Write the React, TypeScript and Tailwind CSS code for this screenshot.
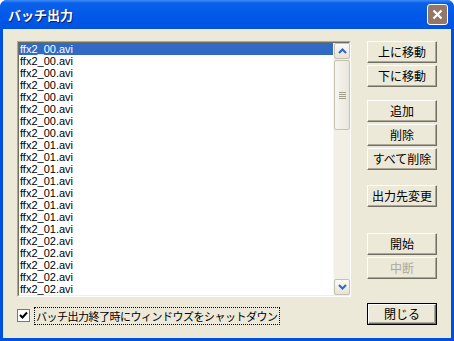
import React from 'react'

const items = [
  ...Array(8).fill('ffx2_00.avi'),
  ...Array(8).fill('ffx2_01.avi'),
  ...Array(5).fill('ffx2_02.avi'),
] as string[]

const jp = "font-['MS_UI_Gothic','Noto_Sans_CJK_JP',sans-serif]"

function Btn({ label, disabled, className = '' }: { label: string; disabled?: boolean; className?: string }) {
  return (
    <div
      className={`flex h-[22px] w-[70px] items-center justify-center border border-t-white border-l-white border-b-[#716F64] border-r-[#716F64] bg-[#ECE9D8] shadow-[inset_-1px_-1px_0_#ACA899] text-[12px] leading-none ${jp} ${
        disabled ? 'text-[#ACA899]' : 'text-black'
      } ${className}`}
    >
      {label}
    </div>
  )
}

function ScrollBtn({ dir }: { dir: 'up' | 'down' }) {
  return (
    <div className="flex h-[16px] w-[16px] items-center justify-center rounded-[2px] border border-[#C5C2B2] bg-[linear-gradient(to_bottom,#FBFAF6,#E6E3D6)]">
      <svg width="9" height="6" viewBox="0 0 9 6">
        <path
          d={dir === 'up' ? 'M1 5 L4.5 1.5 L8 5' : 'M1 1 L4.5 4.5 L8 1'}
          fill="none"
          stroke="#3165C8"
          strokeWidth="2"
        />
      </svg>
    </div>
  )
}

export default function App() {
  return (
    <div className="flex h-[341px] w-[454px] flex-col overflow-hidden rounded-t-[7px] bg-[#0050DE]">
      {/* title bar */}
      <div className="flex h-[29px] shrink-0 items-center justify-between bg-[linear-gradient(to_bottom,#3E8CF8_0px,#0A60EA_3px,#0058E8_18px,#0053E0_29px)] pl-[8px] pr-[6px]">
        <span className={`text-[13px] font-bold text-white [text-shadow:1px_1px_0_#0A1E6E] ${jp}`}>バッチ出力</span>
        <div className="flex h-[21px] w-[21px] items-center justify-center rounded-[3px] border border-white bg-[#93786A]">
          <svg width="11" height="11" viewBox="0 0 11 11">
            <path d="M1.5 1.5 L9.5 9.5 M9.5 1.5 L1.5 9.5" stroke="white" strokeWidth="2.2" />
          </svg>
        </div>
      </div>

      {/* client area */}
      <div className="mx-[3px] mb-[3px] flex flex-1 flex-col bg-[#ECE9D8] pl-[14px] pt-[12px]">
        <div className="flex">
          {/* list box */}
          <div className="h-[256px] w-[334px] border border-t-[#ACA899] border-l-[#ACA899] border-b-white border-r-white">
            <div className="flex h-full border border-t-[#716F64] border-l-[#716F64] border-b-[#F1EFE2] border-r-[#F1EFE2] bg-white">
              <div className="flex-1 font-['Liberation_Sans',Arial,sans-serif] text-[11px]">
                {items.map((name, i) => (
                  <div
                    key={i}
                    className={`flex h-[12px] items-center pl-[1px] leading-none ${
                      i === 0 ? 'bg-[#316AC5] text-white' : 'text-black'
                    }`}
                  >
                    {name}
                  </div>
                ))}
              </div>
              {/* scrollbar */}
              <div className="flex w-[16px] flex-col border-l border-[#F7F6F1] bg-[#F1EFE6]">
                <ScrollBtn dir="up" />
                <div className="mt-[1px] flex h-[70px] w-[16px] flex-col items-center justify-center gap-[1px] rounded-[2px] border border-[#C5C2B2] bg-[linear-gradient(to_right,#F6F5EF,#E9E7DC)]">
                  {[0, 1, 2, 3].map(k => (
                    <div key={k} className="h-[1px] w-[7px] bg-[#A29E8E]" />
                  ))}
                </div>
                <div className="flex-1" />
                <ScrollBtn dir="down" />
              </div>
            </div>
          </div>

          {/* buttons */}
          <div className="ml-[16px] flex flex-col">
            <Btn label="上に移動" />
            <Btn label="下に移動" className="mt-[2px]" />
            <Btn label="追加" className="mt-[13px]" />
            <Btn label="削除" className="mt-[2px]" />
            <Btn label="すべて削除" className="mt-[2px]" />
            <Btn label="出力先変更" className="mt-[15px]" />
            <Btn label="開始" className="mt-[26px]" />
            <Btn label="中断" disabled className="mt-[2px]" />
          </div>
        </div>

        {/* bottom row */}
        <div className="mt-[6px] flex h-[22px]">
          <div className="flex w-[334px] items-center pt-[3px]">
            <div className="flex h-[13px] w-[13px] items-center justify-center border border-[#7A776C] bg-white">
              <svg width="9" height="9" viewBox="0 0 9 9">
                <path d="M1 4 L3.5 6.5 L8 1.5" fill="none" stroke="black" strokeWidth="2" />
              </svg>
            </div>
            <div className="ml-[4px] border border-dotted border-black px-[1px] py-[1px]">
              <span className={`block text-[11px] leading-[14px] tracking-[-0.5px] text-black ${jp}`}>
                バッチ出力終了時にウィンドウズをシャットダウン
              </span>
            </div>
          </div>
          <div className="ml-[16px] border border-black">
            <div className="flex h-[20px] w-[68px] items-center justify-center border border-t-white border-l-white border-b-[#716F64] border-r-[#716F64] bg-[#ECE9D8] shadow-[inset_-1px_-1px_0_#ACA899]">
              <span className={`text-[12px] leading-none text-black ${jp}`}>閉じる</span>
            </div>
          </div>
        </div>
      </div>
    </div>
  )
}
